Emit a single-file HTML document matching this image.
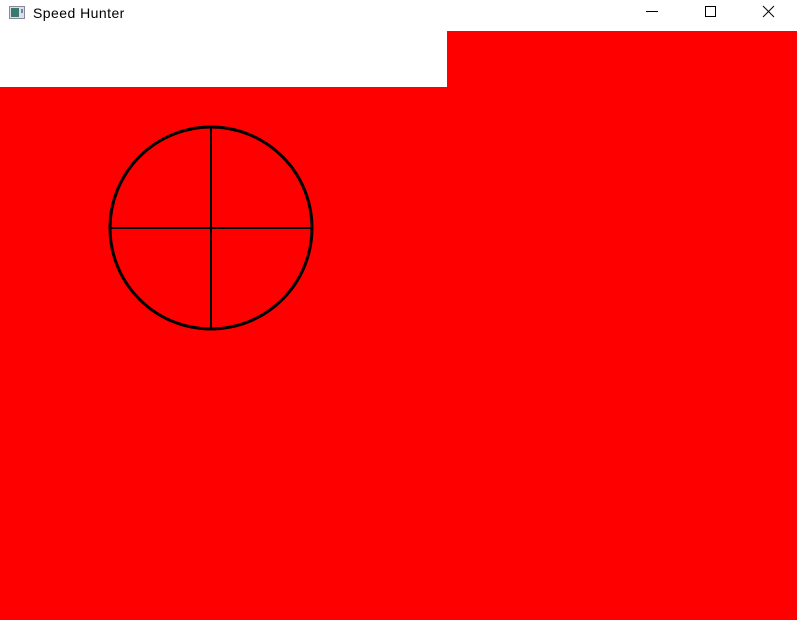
<!DOCTYPE html>
<html><head><style>
html,body{margin:0;padding:0;width:797px;height:620px;overflow:hidden;background:#f00;position:relative;font-family:"Liberation Sans",sans-serif}
.bar{position:absolute;left:0;top:0;width:797px;height:31px;background:#fff}
.blk{position:absolute;left:0;top:31px;width:447px;height:56px;background:#fff}
.t{position:absolute;left:33px;top:5px;font-size:14px;color:#000;letter-spacing:0.45px}
</style></head><body>
<div class="bar"></div><div class="blk"></div>
<svg style="position:absolute;left:9px;top:6px" width="16" height="14"><rect x="0.5" y="0.5" width="15" height="12" fill="#dde" stroke="#889"/><rect x="2" y="2" width="8" height="9" fill="#3a7a6a"/><rect x="12" y="3" width="2" height="4" fill="#68a"/></svg>
<div class="t">Speed Hunter</div>
<svg style="position:absolute;left:640px;top:0" width="157" height="31" fill="none" stroke="#000" stroke-width="1">
<line x1="6" y1="11.5" x2="18" y2="11.5"/>
<rect x="65.5" y="6.5" width="10" height="10"/>
<line x1="123" y1="6" x2="134" y2="17"/><line x1="134" y1="6" x2="123" y2="17"/>
</svg>
<svg style="position:absolute;left:0;top:0" width="797" height="620" fill="none" stroke="#000">
<circle cx="211" cy="228" r="101" stroke-width="3"/>
<line x1="110" y1="228" x2="312" y2="228" stroke-width="2"/>
<line x1="211" y1="127" x2="211" y2="329" stroke-width="2"/>
</svg>
</body></html>
